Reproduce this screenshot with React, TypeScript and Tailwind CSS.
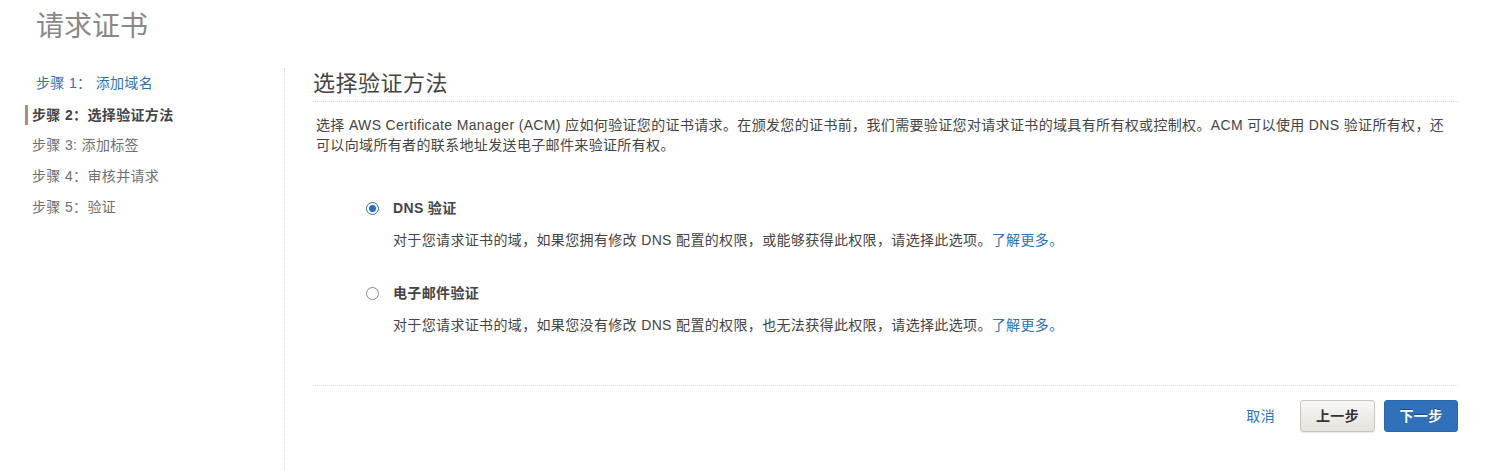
import React from 'react';

const FONT = '"Liberation Sans", "Noto Sans CJK SC", Arial, sans-serif';

const STEPS = [
  { label: '步骤 1： 添加域名', state: 'done' as const },
  { label: '步骤 2：选择验证方法', state: 'active' as const },
  { label: '步骤 3: 添加标签', state: 'todo' as const },
  { label: '步骤 4：审核并请求', state: 'todo' as const },
  { label: '步骤 5：验证', state: 'todo' as const },
];

const Radio: React.FC<{ checked: boolean }> = ({ checked }) =>
  checked ? (
    <span className="flex h-[13px] w-[13px] items-center justify-center rounded-full border border-[#2b6cc0] bg-white">
      <span className="h-[7px] w-[7px] rounded-full bg-[#2b6cc0]" />
    </span>
  ) : (
    <span className="h-[13px] w-[13px] rounded-full border border-[#8a8a8a] bg-white" />
  );

const Option: React.FC<{ checked: boolean; title: string; desc: string; className?: string }> = ({
  checked,
  title,
  desc,
  className = '',
}) => (
  <div className={className}>
    <div className="flex h-[20px] items-center">
      <span className="flex w-[27px] items-center">
        <Radio checked={checked} />
      </span>
      <span className="font-bold text-[#444]">{title}</span>
    </div>
    <p className="mt-[12px] pl-[27px] leading-[20px] text-[#444]">
      {desc}
      <a className="text-[#2d72b8]">了解更多。</a>
    </p>
  </div>
);

export default function App() {
  return (
    <div className="min-h-[470px] bg-white text-[14px] tracking-[0.35px] text-[#444]" style={{ fontFamily: FONT }}>
      <h1 className="pl-[36px] pt-[10px] text-[28px] font-normal leading-[34px] tracking-normal text-[#888]">请求证书</h1>

      <div className="mt-[24px] flex">
        {/* step list */}
        <nav className="w-[284px] shrink-0 pl-[25px]">
          {STEPS.map(step => (
            <div key={step.label} className="flex h-[31px] items-center">
              {step.state === 'active' ? (
                <span className="border-l-[3px] border-[#b08d6e] pl-[4px] font-bold leading-[20px] text-[#444]">
                  {step.label}
                </span>
              ) : step.state === 'done' ? (
                <span className="pl-[11px] text-[#2d72b8]">{step.label}</span>
              ) : (
                <span className="pl-[7px] text-[#6f6f6f]">{step.label}</span>
              )}
            </div>
          ))}
        </nav>

        <main className="min-h-[402px] flex-1 border-l border-dotted border-[#d9d9d9] pl-[28px] pr-[42px]">
          <h2 className="border-b border-dotted border-[#d6d6d6] pb-[2px] text-[22px] font-normal leading-[31px] tracking-[0.5px] text-[#444]">
            选择验证方法
          </h2>
          <p className="mt-[13px] pl-[3px] leading-[20px]">
            选择 AWS Certificate Manager (ACM) 应如何验证您的证书请求。在颁发您的证书前，我们需要验证您对请求证书的域具有所有权或控制权。ACM 可以使用 DNS 验证所有权，还
            <br />
            可以向域所有者的联系地址发送电子邮件来验证所有权。
          </p>

          <div className="mt-[43px] pl-[53px]">
            <Option
              checked
              title="DNS 验证"
              desc="对于您请求证书的域，如果您拥有修改 DNS 配置的权限，或能够获得此权限，请选择此选项。"
            />
            <Option
              checked={false}
              className="mt-[33px]"
              title="电子邮件验证"
              desc="对于您请求证书的域，如果您没有修改 DNS 配置的权限，也无法获得此权限，请选择此选项。"
            />
          </div>

          <div className="mt-[50px] border-t border-dotted border-[#dcdcdc]" />

          <div className="mt-[14px] flex items-center justify-end">
            <a className="mr-[25px] text-[#2d72b8]">取消</a>
            <button className="h-[32px] w-[75px] rounded-[3px] border border-[#c9c5bd] bg-gradient-to-b from-[#f8f8f8] to-[#e6e2dc] font-bold text-[#333] shadow-[0_1px_1px_rgba(0,0,0,0.08)]">
              上一步
            </button>
            <button className="ml-[9px] h-[32px] w-[74px] rounded-[3px] border border-[#2a68ad] bg-[#2f72bb] font-bold text-white [text-shadow:0_-1px_0_rgba(0,0,0,0.35)]">
              下一步
            </button>
          </div>
        </main>
      </div>
    </div>
  );
}
